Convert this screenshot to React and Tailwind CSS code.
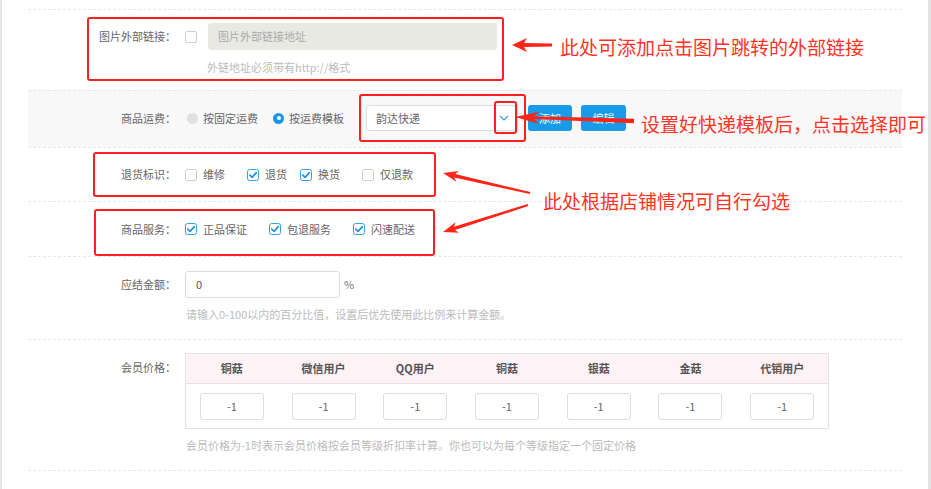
import React from 'react';

const RED = '#ff2418';

function Box({ checked }) {
  if (checked) {
    return (
      <svg width="12" height="12" viewBox="0 0 12 12" className="shrink-0">
        <rect x="0.5" y="0.5" width="11" height="11" rx="2" fill="#fff" stroke="#3aa0e4" />
        <path d="M2.8 6.1 L5.1 8.4 L9.3 3.6" fill="none" stroke="#1e8fe0" strokeWidth="1.6" strokeLinecap="round" strokeLinejoin="round" />
      </svg>
    );
  }
  return <span className="block w-3 h-3 shrink-0 rounded-[2px] border border-[#cfcfcf] bg-white" />;
}

function Radio({ checked }) {
  if (checked) {
    return (
      <span className="flex w-[11px] h-[11px] shrink-0 items-center justify-center rounded-full bg-[#1e94e6]">
        <span className="block w-[4px] h-[4px] rounded-full bg-white" />
      </span>
    );
  }
  return <span className="block w-[11px] h-[11px] shrink-0 rounded-full bg-[#e0e0e0]" />;
}

function Label({ children, h = 'h-[27px]' }) {
  return (
    <div className={`w-[148px] shrink-0 flex items-center justify-end text-[11px] text-[#666] ${h}`}>{children}</div>
  );
}

function Item({ checked, text, cls = '' }) {
  return (
    <div className={`flex items-center ${cls}`}>
      <Box checked={checked} />
      <span className="ml-[6px] text-[11px] text-[#666]">{text}</span>
    </div>
  );
}

// arrow shape from tip to tail
function arrow(tip, tail, headLen, headW, swHead, swTail) {
  const dx = tail[0] - tip[0], dy = tail[1] - tip[1];
  const len = Math.hypot(dx, dy);
  const ux = dx / len, uy = dy / len;
  const nx = -uy, ny = ux;
  const p = (d, s) => `${(tip[0] + ux * d + nx * s).toFixed(1)},${(tip[1] + uy * d + ny * s).toFixed(1)}`;
  return [
    p(0, 0),
    p(headLen, headW),
    p(headLen * 0.8, swHead),
    p(len, swTail),
    p(len, -swTail),
    p(headLen * 0.8, -swHead),
    p(headLen, -headW),
  ].join(' ');
}

const levels = ['铜菇', '微信用户', 'QQ用户', '铜菇', '银菇', '金菇', '代销用户'];

export default function App() {
  return (
    <div className="relative w-[931px] h-[489px] overflow-hidden flex bg-white font-['Noto_Sans_CJK_SC','Noto_Sans',sans-serif]">
      <div className="w-[2px] bg-[#e3e3e3]" />
      <div className="flex-1">
        <div className="ml-[26px] w-[874px] pt-[9px]">
          {/* 图片外部链接 */}
          <div className="h-[81px] border-t border-dashed border-[#e8e8e8] flex pt-[13px]">
            <Label>图片外部链接：</Label>
            <div className="ml-[9px] flex flex-col">
              <div className="flex items-center">
                <Box />
                <div className="ml-[11px] w-[289px] h-[27px] rounded-[3px] bg-[#e9e9e4] px-[10px] flex items-center text-[11px] text-[#aaa]">图片外部链接地址</div>
              </div>
              <div className="ml-[22px] mt-[10px] text-[11px] leading-[14px] text-[#bbb]">外链地址必须带有http://格式</div>
            </div>
          </div>

          {/* 商品运费 */}
          <div className="h-[57px] border-t border-dashed border-[#e8e8e8] bg-[#f8f8f8] flex pt-[14px]">
            <Label h="h-[26px]">商品运费：</Label>
            <div className="ml-[11px] flex items-center h-[26px]">
              <Radio />
              <span className="ml-[5px] text-[11px] text-[#666]">按固定运费</span>
              <span className="ml-[15px]"><Radio checked /></span>
              <span className="ml-[5px] text-[11px] text-[#666]">按运费模板</span>
              <div className="ml-[22px] w-[152px] h-[26px] rounded-[3px] border border-[#dcdcdc] bg-white flex items-center justify-between pl-[9px] pr-[8px]">
                <span className="text-[11px] text-[#666]">韵达快递</span>
                <svg width="10" height="6" viewBox="0 0 10 6"><path d="M1 1 L5 5 L9 1" fill="none" stroke="#3b9de0" strokeWidth="1.2" /></svg>
              </div>
              <button className="ml-[10px] w-[44px] h-[26px] rounded-[3px] bg-[#1a9be8] text-white text-[11px]">添加</button>
              <button className="ml-[9px] w-[45px] h-[26px] rounded-[3px] bg-[#1a9be8] text-white text-[11px]">编辑</button>
            </div>
          </div>

          {/* 退货标识 */}
          <div className="h-[54px] border-t border-dashed border-[#e8e8e8] flex items-center">
            <Label>退货标识：</Label>
            <div className="ml-[9px] flex items-center">
              <Item text="维修" />
              <Item checked text="退货" cls="ml-[22px]" />
              <Item checked text="换货" cls="ml-[13px]" />
              <Item text="仅退款" cls="ml-[22px]" />
            </div>
          </div>

          {/* 商品服务 */}
          <div className="h-[55px] border-t border-dashed border-[#e8e8e8] flex items-center">
            <Label>商品服务：</Label>
            <div className="ml-[9px] flex items-center">
              <Item checked text="正品保证" />
              <Item checked text="包退服务" cls="ml-[22px]" />
              <Item checked text="闪速配送" cls="ml-[22px]" />
            </div>
          </div>

          {/* 应结金额 */}
          <div className="h-[83px] border-t border-dashed border-[#e8e8e8] flex pt-[14px]">
            <Label>应结金额：</Label>
            <div className="ml-[9px] flex flex-col">
              <div className="flex items-center">
                <div className="w-[155px] h-[27px] rounded-[3px] border border-[#dcdcdc] bg-white flex items-center px-[10px] text-[11px] text-[#555]">0</div>
                <span className="ml-[4px] text-[11px] text-[#777]">%</span>
              </div>
              <div className="mt-[9px] ml-[1px] text-[11px] leading-[14px] text-[#bbb]">请输入0-100以内的百分比值，设置后优先使用此比例来计算金额。</div>
            </div>
          </div>

          {/* 会员价格 */}
          <div className="h-[131px] border-t border-dashed border-[#e8e8e8] flex pt-[13px]">
            <Label h="h-[28px]">会员价格：</Label>
            <div className="ml-[9px] flex flex-col">
              <div className="w-[644px] border border-[#e3e3e3]">
                <div className="h-[30px] bg-[#fdf2f5] border-b border-[#e3e3e3] grid grid-cols-7">
                  {levels.map((l, i) => (
                    <div key={i} className="flex items-center justify-center text-[11px] font-bold text-[#555]">{l}</div>
                  ))}
                </div>
                <div className="h-[44px] grid grid-cols-7">
                  {levels.map((l, i) => (
                    <div key={i} className="flex items-center justify-center">
                      <div className="w-[64px] h-[27px] rounded-[3px] border border-[#dedede] bg-white flex items-center justify-center text-[11px] text-[#666]">-1</div>
                    </div>
                  ))}
                </div>
              </div>
              <div className="mt-[9px] ml-[1px] text-[11px] leading-[14px] text-[#bbb]">会员价格为-1时表示会员价格按会员等级折扣率计算。你也可以为每个等级指定一个固定价格</div>
            </div>
          </div>
          <div className="border-t border-dashed border-[#e8e8e8]" />
        </div>
      </div>
      <div className="w-[3px] bg-[#e3e3e3]" />

      {/* annotations */}
      <div className="absolute left-[87px] top-[17px] w-[417px] h-[64px] border-2 border-[#ff1f1f] rounded-[3px]" />
      <div className="absolute left-[359px] top-[94px] w-[167px] h-[48px] border-2 border-[#ff1f1f] rounded-[3px]" />
      <div className="absolute left-[494px] top-[101px] w-[23px] h-[33px] border-2 border-[#ff1f1f] rounded-[3px]" />
      <div className="absolute left-[93px] top-[152px] w-[343px] h-[45px] border-2 border-[#ff1f1f] rounded-[3px]" />
      <div className="absolute left-[94px] top-[209px] w-[341px] h-[47px] border-2 border-[#ff1f1f] rounded-[3px]" />

      <svg className="absolute left-0 top-0 pointer-events-none" width="931" height="489">
        <polygon points={arrow([512, 45], [552, 45], 15, 7, 2, 1.6)} fill={RED} />
        <polygon points={arrow([515, 117], [634, 121], 24, 6, 1.4, 2.2)} fill={RED} />
        <polygon points={arrow([443, 173], [530, 193], 15, 5.5, 1.8, 1)} fill={RED} />
        <polygon points={arrow([443, 232], [528, 205], 15, 5.5, 1.8, 1)} fill={RED} />
      </svg>

      <div className="absolute left-[560px] top-[35px] text-[19px] leading-[24px] text-[#ff3326] whitespace-nowrap">此处可添加点击图片跳转的外部链接</div>
      <div className="absolute left-[641px] top-[112px] text-[19px] leading-[24px] text-[#ff3326] whitespace-nowrap">设置好快递模板后，点击选择即可</div>
      <div className="absolute left-[543px] top-[189px] text-[19px] leading-[24px] text-[#ff3326] whitespace-nowrap">此处根据店铺情况可自行勾选</div>
    </div>
  );
}
